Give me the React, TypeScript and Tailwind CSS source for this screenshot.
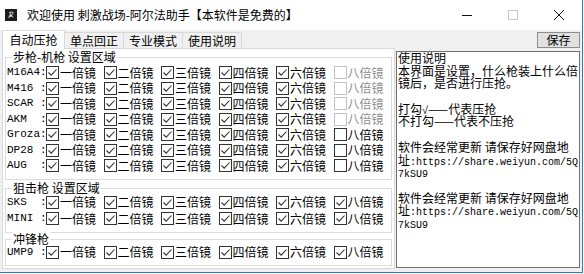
import clsx from 'clsx'

type BoxState = 'on' | 'off' | 'disabled'

const SCOPES = ['一倍镜', '二倍镜', '三倍镜', '四倍镜', '六倍镜', '八倍镜']

const RIFLES: { name: string; eight: BoxState }[] = [
  { name: 'M16A4:', eight: 'disabled' },
  { name: 'M416 :', eight: 'disabled' },
  { name: 'SCAR :', eight: 'disabled' },
  { name: 'AKM  :', eight: 'disabled' },
  { name: 'Groza:', eight: 'off' },
  { name: 'DP28 :', eight: 'off' },
  { name: 'AUG  :', eight: 'off' },
]

const SNIPERS = ['SKS  :', 'MINI :']

const TABS = ['自动压抢', '单点回正', '专业模式', '使用说明']

const cjk = "font-['Noto_Sans_CJK_SC',sans-serif]"
const mono = "font-['Liberation_Mono',monospace]"

function Box({ state }: { state: BoxState }) {
  return (
    <span
      className={clsx(
        'flex h-[13px] w-[13px] shrink-0 items-center justify-center border bg-white',
        state === 'disabled' ? 'border-[#c2c2c2]' : 'border-[#333333]'
      )}
    >
      {state === 'on' && (
        <svg width="11" height="11" viewBox="0 0 11 11">
          <path d="M1.5 5.5 L4.2 8.2 L9.5 2.5" stroke="#333333" strokeWidth="1.1" fill="none" />
        </svg>
      )}
    </span>
  )
}

function Row({ name, eight, h }: { name: string; eight: BoxState; h: string }) {
  return (
    <div className={clsx('flex items-center', h)}>
      <span className={clsx(mono, 'w-[39px] whitespace-pre text-[11px] leading-none text-black')}>{name}</span>
      {SCOPES.map((s, i) => {
        const state = i === 5 ? eight : 'on'
        return (
          <div key={s} className="flex w-[58px] items-center gap-[1px]">
            <Box state={state} />
            <span
              className={clsx(
                cjk,
                'text-[12px] leading-none',
                state === 'disabled' ? 'text-[#8e8e8e]' : 'text-black'
              )}
            >
              {s}
            </span>
          </div>
        )
      })}
    </div>
  )
}

function Group({ title, className, children }: { title: string; className: string; children: React.ReactNode }) {
  return (
    <div className={clsx('relative border border-[#dcdcdc] pl-[1px]', className)}>
      <span className={clsx(cjk, 'absolute -top-[8px] left-[6px] bg-white px-[1px] text-[12px] leading-[14px] text-black')}>
        {title}
      </span>
      {children}
    </div>
  )
}

function Url({ text, prefix }: { text: string; prefix?: boolean }) {
  return (
    <>
      {prefix && '址'}
      <span className={clsx(mono, 'text-[10px]')}>{text}</span>
    </>
  )
}

export default function App() {
  return (
    <div className="h-[274px] w-[584px] overflow-hidden bg-white">
      <div className="flex h-[273px] w-[583px] flex-col border-b border-r border-[#2a7bd3]">
        {/* Title bar */}
        <div className="flex h-[30px] shrink-0 items-center bg-white">
          <svg className="ml-[5px] shrink-0" width="12" height="12" viewBox="0 0 12 12">
            <rect width="12" height="12" fill="#1c1c1c" />
            <path d="M3 9 L5 5 L4 3 L7 2.5 L9 4 L7 6 L9 9 L6.5 7.5 Z" fill="#cfcfcf" />
            <circle cx="6.5" cy="4.5" r="1" fill="#1c1c1c" />
          </svg>
          <span className={clsx(cjk, 'ml-[10px] text-[12px] leading-none text-black')}>
            欢迎使用 刺激战场-阿尔法助手【本软件是免费的】
          </span>
          <div className="ml-auto flex h-full">
            <div className="flex w-[46px] items-center justify-center">
              <svg width="10" height="10" viewBox="0 0 10 10">
                <path d="M0 5.5 H10" stroke="#111" strokeWidth="1" />
              </svg>
            </div>
            <div className="flex w-[46px] items-center justify-center">
              <svg width="10" height="10" viewBox="0 0 10 10">
                <rect x="0.5" y="0.5" width="9" height="9" stroke="#c8c8c8" fill="none" />
              </svg>
            </div>
            <div className="flex w-[46px] items-center justify-center">
              <svg width="10" height="10" viewBox="0 0 10 10">
                <path d="M0 0 L10 10 M10 0 L0 10" stroke="#111" strokeWidth="1" />
              </svg>
            </div>
          </div>
        </div>

        {/* Client area */}
        <div className="flex flex-1 bg-[#f0f0f0]">
          {/* Tab control */}
          <div className="ml-[2px] flex w-[393px] flex-col">
            <div className="flex h-[18px] items-end">
              {TABS.map((t, i) =>
                i === 0 ? (
                  <div
                    key={t}
                    className={clsx(
                      cjk,
                      'relative z-10 -mb-[1px] flex h-[19px] w-[63px] items-center justify-center border-x border-t border-[#d9d9d9] bg-white text-[12px] leading-none text-black'
                    )}
                  >
                    {t}
                  </div>
                ) : (
                  <div
                    key={t}
                    className={clsx(
                      cjk,
                      'flex h-[16px] w-[59px] items-center justify-center border-r border-t border-[#d9d9d9] bg-[#f0f0f0] pt-[1px] text-[12px] leading-none text-black'
                    )}
                  >
                    {t}
                  </div>
                )
              )}
            </div>
            <div className="h-[221px] border border-[#d9d9d9] bg-white px-[2px]">
              <Group title="步枪-机枪 设置区域" className="mt-[8px] h-[123px] pt-[7px]">
                {RIFLES.map((r) => (
                  <Row key={r.name} name={r.name} eight={r.eight} h="h-[15.5px]" />
                ))}
              </Group>
              <Group title="狙击枪 设置区域" className="mt-[8px] h-[45px] pt-[5px]">
                {SNIPERS.map((n) => (
                  <Row key={n} name={n} eight="on" h="h-[16.5px]" />
                ))}
              </Group>
              <Group title="冲锋枪" className="mt-[6px] h-[27px] pt-[4px]">
                <Row name="UMP9 :" eight="on" h="h-[16px]" />
              </Group>
            </div>
          </div>

          {/* Right column */}
          <div className="ml-[1px] flex w-[184px] flex-col">
            <div className="mt-[2px] flex justify-end">
              <button
                className={clsx(
                  cjk,
                  'flex h-[16px] w-[43px] items-center justify-center border border-[#8c8c8c] bg-[#e1e1e1] text-[12px] leading-none text-black'
                )}
              >
                保存
              </button>
            </div>
            <div
              className={clsx(
                cjk,
                'mt-[3px] h-[217px] border border-[#6f6f6f] bg-white pl-[1px] text-[12px] leading-[12.7px] text-black [&>div]:h-[12.7px] [&>div]:whitespace-pre'
              )}
            >
              <div>使用说明</div>
              <div>本界面是设置，什么枪装上什么倍</div>
              <div>镜后，是否进行压抢。</div>
              <div />
              <div>
                打勾<span className="font-['Liberation_Sans',sans-serif] text-[11px]">√</span>——代表压抢
              </div>
              <div>不打勾——代表不压抢</div>
              <div />
              <div>软件会经常更新 请保存好网盘地</div>
              <div>
                <Url prefix text=":https://share.weiyun.com/5Q" />
              </div>
              <div>
                <Url text="7kSU9" />
              </div>
              <div />
              <div>软件会经常更新 请保存好网盘地</div>
              <div>
                <Url prefix text=":https://share.weiyun.com/5Q" />
              </div>
              <div>
                <Url text="7kSU9" />
              </div>
            </div>
          </div>
        </div>
      </div>
    </div>
  )
}
